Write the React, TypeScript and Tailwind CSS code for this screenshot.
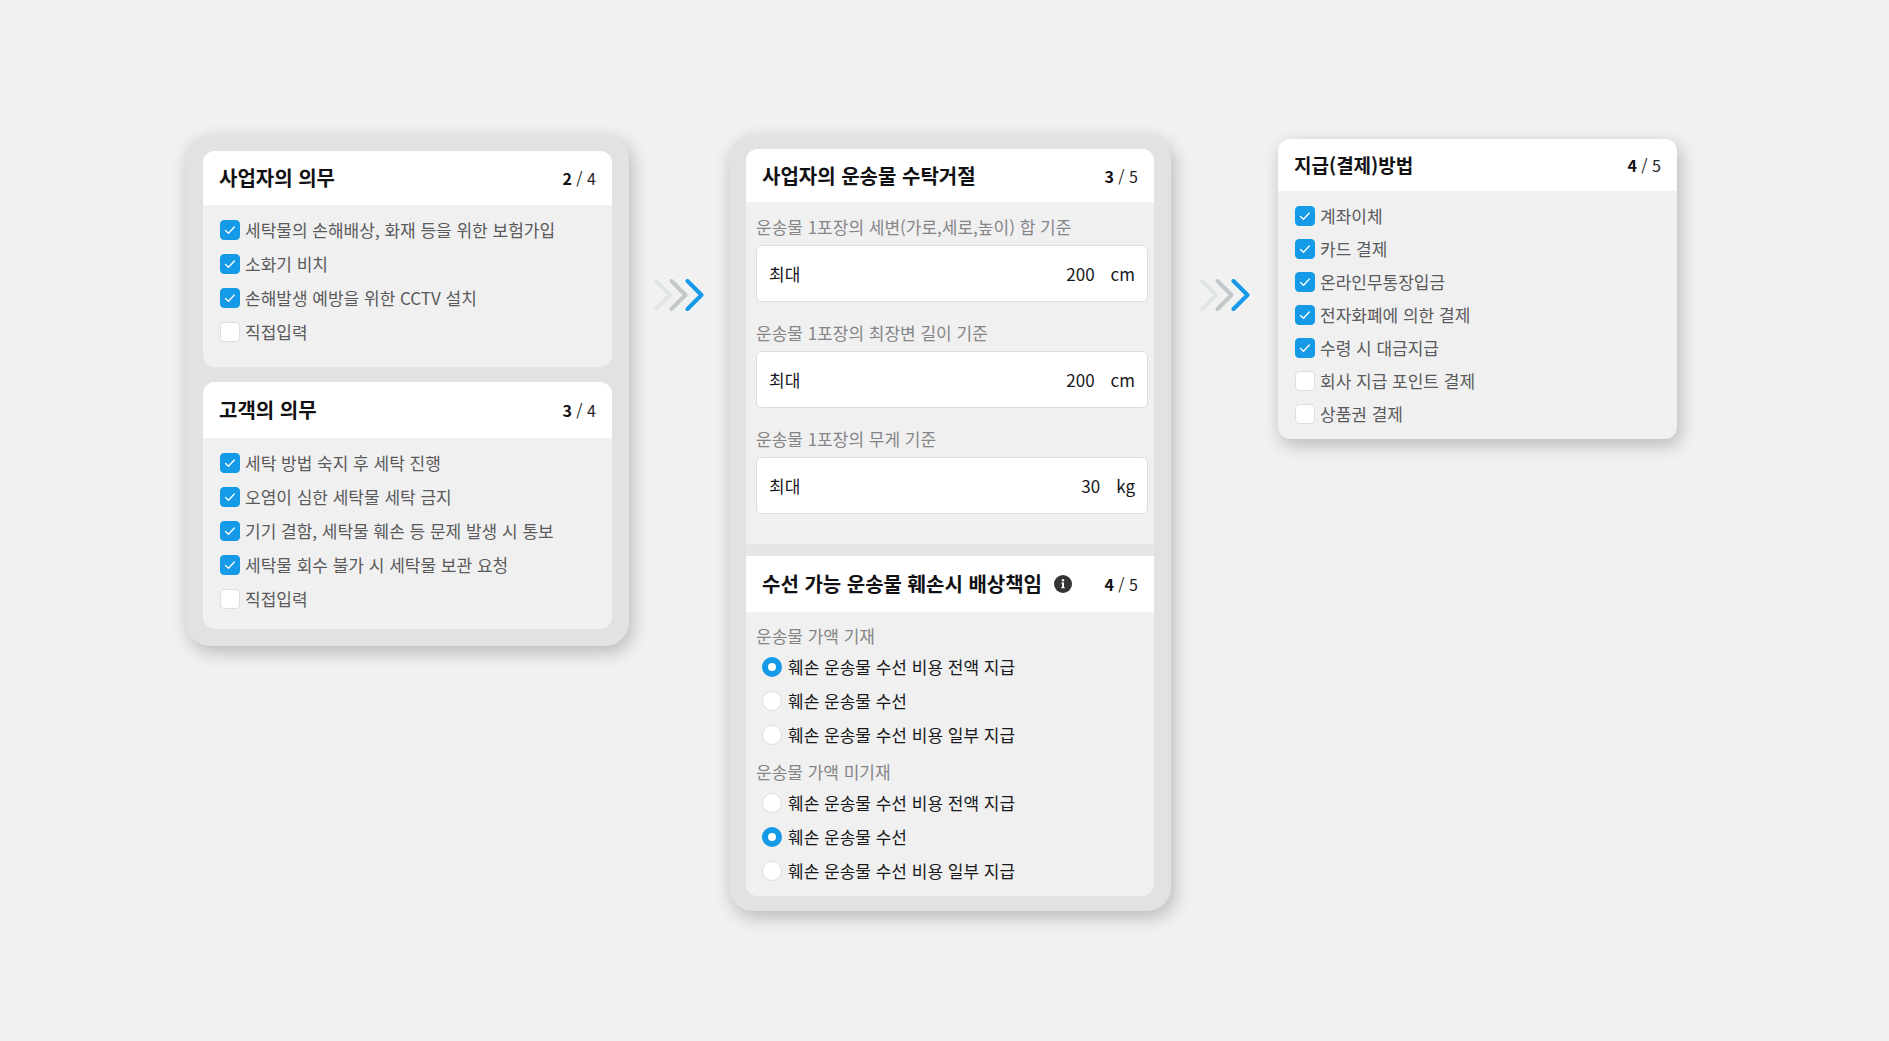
import { useId, type ReactNode } from 'react';

type Item = { label: string; checked?: boolean };

function CheckItem({ label, checked, compact }: Item & { compact?: boolean }) {
  return (
    <li>
      <label
        className={`flex cursor-pointer items-center gap-[5px] text-[17px] leading-6 text-[#5a5a5c] ${
          compact ? 'h-[33px]' : 'h-[34px]'
        }`}
      >
        <span className="grid shrink-0 place-items-center">
          <input
            type="checkbox"
            defaultChecked={checked}
            className="peer col-start-1 row-start-1 size-5 appearance-none rounded border border-[#dedede] bg-white checked:border-[#149ae7] checked:bg-[#149ae7]"
          />
          <svg
            viewBox="0 0 20 20"
            className="pointer-events-none invisible col-start-1 row-start-1 size-5 peer-checked:visible"
            fill="none"
            stroke="#fff"
            strokeWidth="1.3"
            strokeLinecap="round"
            strokeLinejoin="round"
            aria-hidden="true"
          >
            <path d="M5.5 10.4 8.500 13.200 14.300 7" />
          </svg>
        </span>
        {label}
      </label>
    </li>
  );
}

function CardHeader({
  title,
  step,
  total,
  className,
  info,
}: {
  title: string;
  step: number;
  total: number;
  className: string;
  info?: boolean;
}) {
  return (
    <header className={`flex items-center justify-between bg-white px-4 ${className}`}>
      <div className="flex items-center gap-3">
        <h2 className="leading-7 font-bold text-[#111114]">{title}</h2>
        {info && (
          <button type="button" aria-label="도움말" className="shrink-0">
            <svg viewBox="0 0 18 18" className="size-[18px]" aria-hidden="true">
              <circle cx="9" cy="9" r="9" fill="#343437" />
              <circle cx="9" cy="5.200" r="1.200" fill="#fff" />
              <path d="M7.300 7.500h2.700v4.700h.9v1.100H7.100v-1.100h1V8.600h-.8z" fill="#fff" />
            </svg>
          </button>
        )}
      </div>
      <p className="text-base leading-6 whitespace-nowrap text-[#222225]">
        <b className="font-bold text-[#111114]">{step}</b> / {total}
      </p>
    </header>
  );
}

function Panel({ children }: { children: ReactNode }) {
  return (
    <section className="rounded-3xl bg-[#e0e3e2] px-[17px] shadow-[3px_6px_18px_rgba(0,0,0,0.24)]">
      {children}
    </section>
  );
}

function Measure({ label, value, unit }: { label: string; value: string; unit: string }) {
  const id = useId();
  return (
    <div>
      <label htmlFor={id} className="block h-8 text-[17px] leading-7 text-[#858587]">
        {label}
      </label>
      <div className="flex h-[57px] items-center gap-4 rounded-[5px] border border-[#dcdddd] bg-white px-3 text-[17px] leading-6 text-[#18181b]">
        <span>최대</span>
        <input
          id={id}
          type="text"
          inputMode="numeric"
          defaultValue={value}
          className="min-w-0 flex-1 bg-transparent text-right outline-none"
        />
        <span>{unit}</span>
      </div>
    </div>
  );
}

function RadioGroup({ title, options, selected }: { title: string; options: string[]; selected: number }) {
  const name = useId();
  const titleId = useId();
  return (
    <div role="radiogroup" aria-labelledby={titleId} className="pt-[6px]">
      <p id={titleId} className="h-7 text-[17px] leading-7 text-[#858587]">
        {title}
      </p>
      {options.map((option, i) => (
        <label
          key={option}
          className="flex h-[34px] cursor-pointer items-center gap-[6px] pl-[6px] text-[17px] leading-6 text-[#18181b]"
        >
          <input
            type="radio"
            name={name}
            defaultChecked={i === selected}
            className="size-5 shrink-0 appearance-none rounded-full border border-[#dcdddd] bg-white checked:border-[6px] checked:border-[#149ae7]"
          />
          {option}
        </label>
      ))}
    </div>
  );
}

function Arrows() {
  return (
    <div className="flex justify-center lg:pt-36">
      <svg
        viewBox="0 0 50 32"
        className="h-8 w-[50px]"
        fill="none"
        strokeWidth="4"
        strokeLinecap="round"
        strokeLinejoin="round"
        aria-hidden="true"
      >
        <path d="M2 2 16 16 2 30" stroke="#e1e4e4" />
        <path d="M17.500 2 31.500 16 17.500 30" stroke="#c2c8ca" />
        <path d="M33.500 2 47.500 16 33.500 30" stroke="#149ae7" />
      </svg>
    </div>
  );
}

const ownerDuties: Item[] = [
  { label: '세탁물의 손해배상, 화재 등을 위한 보험가입', checked: true },
  { label: '소화기 비치', checked: true },
  { label: '손해발생 예방을 위한 CCTV 설치', checked: true },
  { label: '직접입력' },
];

const customerDuties: Item[] = [
  { label: '세탁 방법 숙지 후 세탁 진행', checked: true },
  { label: '오염이 심한 세탁물 세탁 금지', checked: true },
  { label: '기기 결함, 세탁물 훼손 등 문제 발생 시 통보', checked: true },
  { label: '세탁물 회수 불가 시 세탁물 보관 요청', checked: true },
  { label: '직접입력' },
];

const payments: Item[] = [
  { label: '계좌이체', checked: true },
  { label: '카드 결제', checked: true },
  { label: '온라인무통장입금', checked: true },
  { label: '전자화폐에 의한 결제', checked: true },
  { label: '수령 시 대금지급', checked: true },
  { label: '회사 지급 포인트 결제' },
  { label: '상품권 결제' },
];

const repairOptions = ['훼손 운송물 수선 비용 전액 지급', '훼손 운송물 수선', '훼손 운송물 수선 비용 일부 지급'];

export default function App() {
  return (
    <main
      lang="ko"
      className="flex min-h-screen flex-col gap-8 bg-[#f1f1f1] p-6 font-['Noto_Sans_CJK_KR',sans-serif] lg:grid lg:grid-cols-[443fr_100fr_442fr_107fr_399fr] lg:items-start lg:gap-0 lg:pt-[135px] lg:pr-[212px] lg:pl-[186px]"
    >
      <Panel>
        <div className="flex flex-col gap-[15px] pt-4 pb-[17px]">
          <article className="overflow-hidden rounded-xl bg-[#f0f0f0]">
            <CardHeader title="사업자의 의무" step={2} total={4} className="h-[54px] text-xl" />
            <ul className="px-[17px] pt-2 pb-[18px]">
              {ownerDuties.map((item) => (
                <CheckItem key={item.label} {...item} />
              ))}
            </ul>
          </article>
          <article className="overflow-hidden rounded-xl bg-[#f0f0f0]">
            <CardHeader title="고객의 의무" step={3} total={4} className="h-14 text-xl" />
            <ul className="px-[17px] pt-2 pb-[13px]">
              {customerDuties.map((item) => (
                <CheckItem key={item.label} {...item} />
              ))}
            </ul>
          </article>
        </div>
      </Panel>

      <Arrows />

      <Panel>
        <div className="pt-[14px] pb-[15px]">
          <div className="overflow-hidden rounded-xl bg-[#f0f0f0]">
            <CardHeader title="사업자의 운송물 수탁거절" step={3} total={5} className="h-[53px] text-xl" />
            <div className="flex flex-col gap-[17px] pt-[11px] pr-[6px] pb-[30px] pl-[10px]">
              <Measure label="운송물 1포장의 세변(가로,세로,높이) 합 기준" value="200" unit="cm" />
              <Measure label="운송물 1포장의 최장변 길이 기준" value="200" unit="cm" />
              <Measure label="운송물 1포장의 무게 기준" value="30" unit="kg" />
            </div>
            <div className="h-3 bg-[#e6e6e6]" />
            <CardHeader
              title="수선 가능 운송물 훼손시 배상책임"
              step={4}
              total={5}
              className="h-14 text-xl"
              info
            />
            <div className="px-[10px] pt-1 pb-2">
              <RadioGroup title="운송물 가액 기재" options={repairOptions} selected={0} />
              <RadioGroup title="운송물 가액 미기재" options={repairOptions} selected={1} />
            </div>
          </div>
        </div>
      </Panel>

      <Arrows />

      <section className="overflow-hidden rounded-xl bg-[#f0f0f0] shadow-[3px_6px_18px_rgba(0,0,0,0.24)] lg:mt-1">
        <CardHeader title="지급(결제)방법" step={4} total={5} className="h-[52px] text-[19px]" />
        <ul className="px-[17px] pt-2 pb-[9px]">
          {payments.map((item) => (
            <CheckItem key={item.label} {...item} compact />
          ))}
        </ul>
      </section>
    </main>
  );
}
